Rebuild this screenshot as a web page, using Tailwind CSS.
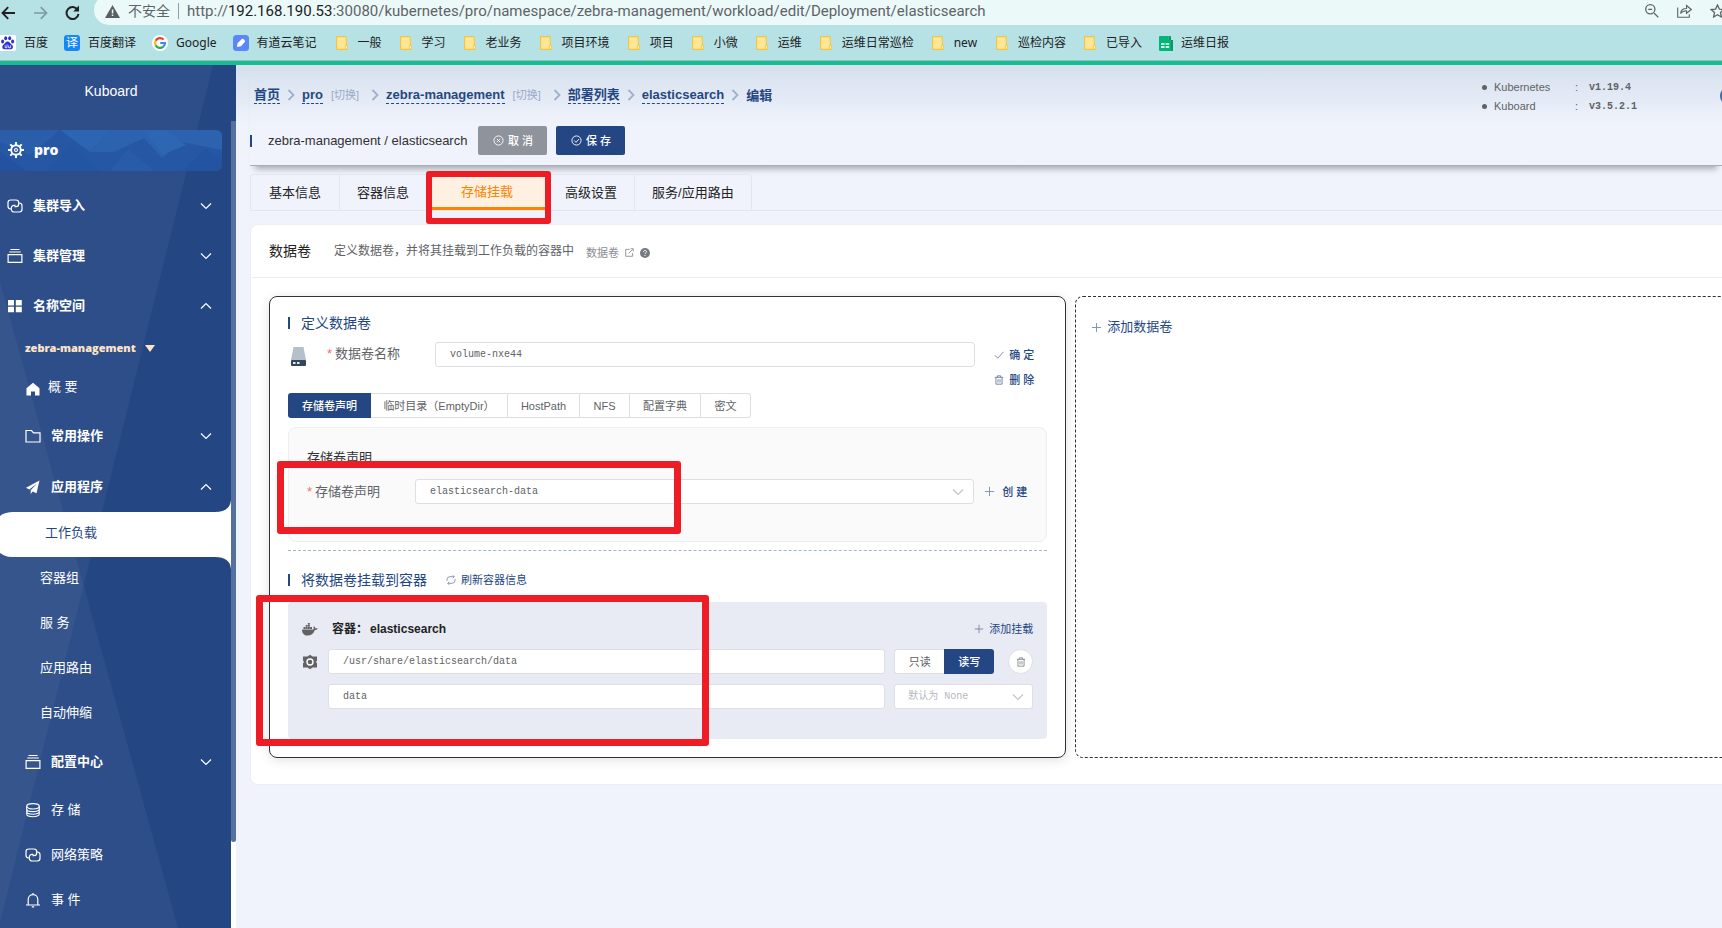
<!DOCTYPE html>
<html lang="zh-CN">
<head>
<meta charset="utf-8">
<title>Kuboard</title>
<script src="https://cdn.jsdelivr.net/npm/@tailwindcss/browser@4"></script>
</head>
<body class="min-h-screen flex flex-col overflow-hidden bg-[#f0f3fc] font-['Liberation_Sans','Noto_Sans_CJK_SC',sans-serif] text-[13px] leading-5 text-[#303133]">

<!-- Shared icons -->
<svg class="hidden" aria-hidden="true">
  <symbol id="down" viewBox="0 0 12 12"><path d="M1 3.500l5 5 5-5" fill="none" stroke="currentColor" stroke-width="1.200"/></symbol>
  <symbol id="up" viewBox="0 0 12 12"><path d="M1 8.500l5-5 5 5" fill="none" stroke="currentColor" stroke-width="1.200"/></symbol>
  <symbol id="right" viewBox="0 0 8 12"><path d="M1.500 1l5 5-5 5" fill="none" stroke="currentColor" stroke-width="1.800"/></symbol>
  <symbol id="plus" viewBox="0 0 12 12"><path d="M6 1v10M1 6h10" fill="none" stroke="currentColor"/></symbol>
  <symbol id="folder" viewBox="0 0 12 14"><path d="M.6.6h9.600v8.600l1.200 1v3.200H.6z" fill="#fee694" stroke="#eec64a" stroke-width="1.100"/><path d="M9.400 9.600h2v3.400h-2z" fill="#fff4c8" stroke="#eec64a" stroke-width=".8"/></symbol>
  <symbol id="link" viewBox="0 0 16 16"><g fill="none" stroke="currentColor" stroke-width="1.200"><path d="M4 11H3.700A2.700 2.700 0 0 1 1 8.300V4.700A2.700 2.700 0 0 1 3.700 2H9A2.700 2.700 0 0 1 11.700 4.700V6A2.700 2.700 0 0 1 9 8.700H7.500"/><path d="M12 5h.3A2.700 2.700 0 0 1 15 7.700v3.600A2.700 2.700 0 0 1 12.300 14H7A2.700 2.700 0 0 1 4.300 11.300V10A2.700 2.700 0 0 1 7 7.300H8.500"/></g></symbol>
  <symbol id="stack" viewBox="0 0 16 16"><path d="M3.500 1.500h9M2.200 4h11.600M1.100 6.600h13.800v7.800H1.100z" fill="none" stroke="currentColor" stroke-width="1.200"/></symbol>
  <symbol id="trash" viewBox="0 0 12 12"><path d="M1 2.800h10M4 2.600V1h4v1.600M2.300 3v8h7.400V3M4.800 5v4M7.200 5v4" fill="none" stroke="currentColor"/></symbol>
</svg>

<header class="bg-[#b7e2e5] text-[#202124] border-b-4 border-[#12bf92] overflow-hidden font-['Noto_Sans','Noto_Sans_CJK_SC',sans-serif]">
  <div class="h-[25px] flex items-center pl-px overflow-hidden">
    <button class="w-8 shrink-0" aria-label="后退"><svg class="w-[15px] h-[14px]" viewBox="0 0 15 14"><path d="M14 7H1.500M7.200 1.200L1.500 7l5.700 5.800" fill="none" stroke="#202124" stroke-width="1.900"/></svg></button>
    <button class="w-8 shrink-0" aria-label="前进"><svg class="w-[15px] h-[14px]" viewBox="0 0 15 14"><path d="M1 7h12.500M7.800 1.200L13.500 7l-5.700 5.800" fill="none" stroke="#7c9c9f" stroke-width="1.700"/></svg></button>
    <button class="w-[29px] shrink-0" aria-label="重新加载"><svg class="w-[15px] h-[15px]" viewBox="0 0 15 15"><path d="M12.600 4.800A6 6 0 1 0 13.500 9" fill="none" stroke="#202124" stroke-width="2"/><path d="M14 .6v5.800H8.200z" fill="#202124"/></svg></button>
    <div class="flex-1 min-w-0 h-[30px] -mt-[5px] pt-[2px] flex items-center bg-[#ebf9f9] rounded-l-full pl-[11px] text-[14px]">
      <svg class="w-[15px] h-[13px]" viewBox="0 0 15 13"><path d="M7.500 0L15 13H0z" fill="#5a6062"/><path d="M6.800 4.500h1.500v4H6.800zM6.800 9.500h1.500V11H6.800z" fill="#ebf9f9"/></svg>
      <span class="pl-2 text-[#5f6368]">不安全</span>
      <span class="w-px h-4 bg-[#8fa0a2] mx-2"></span>
      <span class="text-[#5f6368] font-['Roboto'] text-[15px] whitespace-nowrap">http://<span class="text-[#202124]">192.168.190.53</span>:30080/kubernetes/pro/namespace/zebra-management/workload/edit/Deployment/elasticsearch</span>
      <span class="flex-1"></span>
      <span class="flex shrink-0 gap-[18px] -mr-[3px] text-[#5f6368]">
        <svg class="w-[14px] h-[14px]" viewBox="0 0 14 14"><path d="M9.200 9.200L13.400 13.400M3.200 5.300h4" fill="none" stroke="currentColor" stroke-width="1.300"/><circle cx="5.300" cy="5.300" r="4.600" fill="none" stroke="currentColor" stroke-width="1.300"/></svg>
        <svg class="w-[15px] h-[14px]" viewBox="0 0 15 14"><path d="M.7 3.500v9.800h11.600v-3M3.500 9.500c.5-3.500 3-5 6-5V1.500L14.300 5.500 9.500 9.300V6.700C7 6.700 5 7.500 3.500 9.500z" fill="none" stroke="currentColor" stroke-width="1.100"/></svg>
        <svg class="w-[15px] h-[14px]" viewBox="0 0 15 14"><path d="M7.500 1l1.900 4.100 4.400.5-3.300 3 .9 4.400-3.900-2.200L3.600 13l.9-4.400-3.300-3 4.400-.5z" fill="none" stroke="currentColor" stroke-width="1.300"/></svg>
      </span>
    </div>
  </div>
  <nav class="h-9 pt-px flex items-center gap-4 text-[12px] whitespace-nowrap border-b border-[#9fb9bd]">
    <a href="#" class="flex items-center gap-2"><svg class="w-4 h-4" viewBox="0 0 16 16"><path d="M0 0h14a2 2 0 0 1 2 2v12a2 2 0 0 1-2 2H0z" fill="#fff"/><g fill="#2a32d8"><ellipse cx="2.600" cy="6.600" rx="1.500" ry="2"/><ellipse cx="5.700" cy="3.200" rx="1.500" ry="2"/><ellipse cx="9.700" cy="3.200" rx="1.500" ry="2"/><ellipse cx="12.600" cy="6.600" rx="1.500" ry="2"/><path d="M7.600 6.400c2 0 2.700 2.200 4.200 3.400 1.800 1.400 1.500 4.500-1 4.500H4.500c-2.500 0-2.800-3-1-4.500C5 8.600 5.600 6.400 7.600 6.400z"/></g><path d="M5.200 10.300v2.400H7V9.400M8.600 10.500v2.200h2v-2.300" fill="none" stroke="#fff" stroke-width=".8"/></svg>百度</a>
    <a href="#" class="flex items-center gap-2"><span class="w-4 h-4 rounded-[3px] bg-[#1688f5] text-white text-[12px] leading-4 text-center">译</span>百度翻译</a>
    <a href="#" class="flex items-center gap-2"><svg class="w-4 h-4" viewBox="0 0 16 16"><circle cx="8" cy="8" r="8" fill="#fff"/><g fill="none" stroke-width="2.200"><path d="M11.600 4.600A5 5 0 0 0 3.600 5.700" stroke="#ea4335"/><path d="M3.600 5.700a5 5 0 0 0 0 4.600" stroke="#fbbc05"/><path d="M3.600 10.300a5 5 0 0 0 7.700 1.400" stroke="#34a853"/><path d="M11.300 11.700A5 5 0 0 0 13 8H8.200" stroke="#4285f4"/></g></svg>Google</a>
    <a href="#" class="flex items-center gap-2"><svg class="w-4 h-4" viewBox="0 0 16 16"><rect width="16" height="16" rx="3.500" fill="#5b86f8"/><path d="M4 12l.5-3.800L9 3.800c.8-.8 3.800 1.800 3 3L8 11.300z" fill="#fff"/></svg>有道云笔记</a>
    <a href="#" class="flex items-center gap-[10px] pl-[3px]"><svg class="w-3 h-[14px]"><use href="#folder"/></svg>一般</a>
    <a href="#" class="flex items-center gap-[10px] pl-[2px]"><svg class="w-3 h-[14px]"><use href="#folder"/></svg>学习</a>
    <a href="#" class="flex items-center gap-[10px] pl-[2px]"><svg class="w-3 h-[14px]"><use href="#folder"/></svg>老业务</a>
    <a href="#" class="flex items-center gap-[10px] pl-[2px]"><svg class="w-3 h-[14px]"><use href="#folder"/></svg>项目环境</a>
    <a href="#" class="flex items-center gap-[10px] pl-[2px]"><svg class="w-3 h-[14px]"><use href="#folder"/></svg>项目</a>
    <a href="#" class="flex items-center gap-[10px] pl-[2px]"><svg class="w-3 h-[14px]"><use href="#folder"/></svg>小微</a>
    <a href="#" class="flex items-center gap-[10px] pl-[2px]"><svg class="w-3 h-[14px]"><use href="#folder"/></svg>运维</a>
    <a href="#" class="flex items-center gap-[10px] pl-[2px]"><svg class="w-3 h-[14px]"><use href="#folder"/></svg>运维日常巡检</a>
    <a href="#" class="flex items-center gap-[10px] pl-[2px]"><svg class="w-3 h-[14px]"><use href="#folder"/></svg>new</a>
    <a href="#" class="flex items-center gap-[10px] pl-[3px]"><svg class="w-3 h-[14px]"><use href="#folder"/></svg>巡检内容</a>
    <a href="#" class="flex items-center gap-[10px] pl-[2px]"><svg class="w-3 h-[14px]"><use href="#folder"/></svg>已导入</a>
    <a href="#" class="flex items-center gap-2 pl-px"><svg class="w-[14px] h-[15px]" viewBox="0 0 14 15"><path d="M1 0h8.500v4H14v10a1 1 0 0 1-1 1H1a1 1 0 0 1-1-1V1a1 1 0 0 1 1-1z" fill="#00b578"/><path d="M9.500 0h1.500a1 1 0 0 1 1 1v3H9.500zM12 4h2v10a1 1 0 0 1-1 1h-1z" fill="#0a9a5c"/><path d="M2 7h3.600v2H2zM6.600 7h3.600v2H6.600zM2 10h3.600v2H2zM6.600 10h3.600v2H6.600z" fill="#c9f2df"/></svg>运维日报</a>
  </nav>
</header>

<div class="flex-1 flex min-h-0">
  <!-- Sidebar -->
  <aside class="relative w-[236px] shrink-0 bg-[#244783] text-white">
    <svg class="absolute inset-0 w-full h-full" viewBox="0 0 236 863" preserveAspectRatio="none">
      <path d="M0 0H213L0 857z" fill="#fff" fill-opacity=".045"/>
      <path d="M0 217L178 863H0z" fill="#fff" fill-opacity=".045"/>
    </svg>
    <div class="absolute right-0 top-14 bottom-0 w-[5px] bg-white"><div class="h-[89.4%] bg-[#56709d] rounded-b-sm"></div></div>
    <div class="relative pr-[5px]">
      <div class="h-[65px] pt-4 pr-[9px] text-center text-[14px]">Kuboard</div>
      <a href="#" class="relative mr-[9px] h-[41px] flex items-center gap-[10px] pl-2 pb-0.5 rounded-r-md overflow-hidden bg-[#2557a5] font-['Open_Sans'] font-extrabold text-[14px]">
        <svg class="absolute inset-0 w-full h-full" viewBox="0 0 222 41" preserveAspectRatio="none">
          <path d="M0 0h60L30 25 0 12z" fill="#2b5ea8"/><path d="M60 0h50L90 22z" fill="#2c65b2"/><path d="M110 0h112v20l-40-8-20 16-18-20-30 14-24 0z" fill="#2b63af"/><path d="M144 0l22 0 20 15-24 10z" fill="#2d66b2"/><path d="M70 14l30 27H48z" fill="#2356a2"/><path d="M182 41l24-22 16 10v12z" fill="#2354a2"/><path d="M110 41l18-22 26 22z" fill="#285ca8"/><path d="M0 41V22l26 19z" fill="#2252a0"/>
        </svg>
        <svg class="relative w-4 h-4" viewBox="0 0 16 16"><g fill="none" stroke="#fff"><circle cx="8" cy="8" r="4.800" stroke-width="1.900"/><circle cx="8" cy="8" r="1.500" stroke-width="1.200"/><path d="M8 0v3M8 13v3M0 8h3M13 8h3M2.300 2.300l2.200 2.200M11.500 11.500l2.200 2.200M13.700 2.300l-2.200 2.200M4.500 11.500l-2.200 2.200" stroke-width="1.900"/></g></svg>
        <span class="relative">pro</span>
      </a>
      <nav class="pt-[10px]">
        <a href="#" class="h-[50px] flex items-center pl-[7px] pr-[19px] font-bold"><svg class="w-4 h-4 mr-[10px]"><use href="#link"/></svg>集群导入<svg class="w-3 h-3 ml-auto"><use href="#down"/></svg></a>
        <a href="#" class="h-[50px] flex items-center pl-[7px] pr-[19px] font-bold"><svg class="w-4 h-4 mr-[10px]"><use href="#stack"/></svg>集群管理<svg class="w-3 h-3 ml-auto"><use href="#down"/></svg></a>
        <a href="#" class="h-[50px] flex items-center pl-[7px] pr-[19px] font-bold"><svg class="w-4 h-4 mr-[10px]" viewBox="0 0 16 16"><path d="M1 2h6v5.500H1zM8.800 2h6v5.500h-6zM1 8.800h6v5.400H1zM8.800 8.800h6v5.400h-6z" fill="#fff"/></svg>名称空间<svg class="w-3 h-3 ml-auto"><use href="#up"/></svg></a>
        <button class="h-[34px] flex items-center gap-[9px] pl-[25px] font-['Open_Sans'] font-extrabold text-[11px] text-[#fde3c8]">zebra-management<svg class="w-[10px] h-[7px]" viewBox="0 0 10 7"><path d="M0 0h10L5 7z" fill="currentColor"/></svg></button>
        <a href="#" class="h-[46px] pb-0.5 flex items-center pl-[26px]"><svg class="w-[14px] h-[14px] mr-2 mt-1" viewBox="0 0 14 14"><path d="M7 .8l6.500 5.400V13.500H9V9.500H5v4H.5V6.200z" fill="#fff"/></svg>概 要</a>
        <a href="#" class="h-[50px] flex items-center pl-[25px] pr-[19px] font-bold"><svg class="w-4 h-4 mr-[10px]" viewBox="0 0 16 16"><path d="M1 2.500h5.500l2 2.300H15v9.200H1z" fill="none" stroke="#fff" stroke-width="1.200"/></svg>常用操作<svg class="w-3 h-3 ml-auto"><use href="#down"/></svg></a>
        <a href="#" class="h-[51px] flex items-center pl-[25px] pr-[19px] font-bold"><svg class="w-4 h-4 mr-[10px]" viewBox="0 0 16 16"><path d="M14.500 1.500L1 8.800l3.300 1.600L12 4.500l-6.300 6.700V15l2-2.600 3.800 1.800z" fill="#fff"/></svg>应用程序<svg class="w-3 h-3 ml-auto"><use href="#up"/></svg></a>
        <div class="relative">
          <svg class="absolute right-0 -top-3 w-4 h-3" viewBox="0 0 16 12"><path d="M16 0Q15 12 0 12H16z" fill="#fff"/></svg>
          <a href="#" class="h-[45px] -ml-2 pl-[53px] pb-[3px] flex items-center rounded-l-[20px] bg-white text-[#244783]">工作负载</a>
          <svg class="absolute right-0 -bottom-3 w-4 h-3" viewBox="0 0 16 12"><path d="M16 12Q15 0 0 0H16z" fill="#fff"/></svg>
        </div>
        <a href="#" class="h-[45px] pb-[3px] flex items-center pl-10">容器组</a>
        <a href="#" class="h-[45px] pb-[3px] flex items-center pl-10">服 务</a>
        <a href="#" class="h-[45px] pb-[3px] flex items-center pl-10">应用路由</a>
        <a href="#" class="h-[45px] pb-[3px] flex items-center pl-10">自动伸缩</a>
        <a href="#" class="h-[50px] flex items-center pl-[25px] pr-[19px] font-bold"><svg class="w-4 h-4 mr-[10px]"><use href="#stack"/></svg>配置中心<svg class="w-3 h-3 ml-auto"><use href="#down"/></svg></a>
        <a href="#" class="h-[45px] flex items-center pl-[25px]"><svg class="w-4 h-4 mr-[10px]" viewBox="0 0 16 16"><g fill="none" stroke="#fff" stroke-width="1.100"><ellipse cx="8" cy="4.300" rx="6.300" ry="2.700"/><path d="M1.700 4.300v7.800c0 3.500 12.600 3.500 12.600 0V4.300M1.700 7c0 3.500 12.600 3.500 12.600 0M1.700 9.600c0 3.500 12.600 3.500 12.600 0"/></g></svg>存 储</a>
        <a href="#" class="h-[45px] flex items-center pl-[25px]"><svg class="w-4 h-4 mr-[10px]"><use href="#link"/></svg>网络策略</a>
        <a href="#" class="h-[45px] flex items-center pl-[25px]"><svg class="w-4 h-4 mr-[10px]" viewBox="0 0 16 16"><path d="M1 13h14M3.200 13V7.500C3.200 1 12.800 1 12.800 7.500V13M8 2.600V1M6.800 14.900h2.400" fill="none" stroke="#fff" stroke-width="1.200"/></svg>事 件</a>
      </nav>
    </div>
  </aside>

  <!-- Main column -->
  <main class="flex-1 min-w-0 pl-[14px] overflow-hidden bg-linear-to-b from-[#d5e0ed] to-[#f0f3fc] to-[60px]">
    <div class="h-[101px] border-b border-[#a9adb6] shadow-[0_8px_6px_-5px_rgba(0,0,0,0.3)]">
      <div class="flex h-[60px]">
        <nav class="flex-1 h-5 mt-5 pl-1 flex items-center font-bold text-[#244783] leading-[17px]">
          <a href="#" class="border-b border-dashed border-[#244783]">首页</a>
          <svg class="w-2 h-3 mx-[7px] text-[#9fb0cd]"><use href="#right"/></svg>
          <a href="#" class="border-b border-dashed border-[#244783]">pro</a>
          <a href="#" class="ml-2 font-normal text-[11px] text-[#9aa9c8]">[切换]</a>
          <svg class="w-2 h-3 ml-3 mr-[7px] text-[#9fb0cd]"><use href="#right"/></svg>
          <a href="#" class="border-b border-dashed border-[#244783]">zebra-management</a>
          <a href="#" class="ml-2 font-normal text-[11px] text-[#9aa9c8]">[切换]</a>
          <svg class="w-2 h-3 ml-3 mr-[7px] text-[#9fb0cd]"><use href="#right"/></svg>
          <a href="#" class="border-b border-dashed border-[#244783]">部署列表</a>
          <svg class="w-2 h-3 mx-[7px] text-[#9fb0cd]"><use href="#right"/></svg>
          <a href="#" class="border-b border-dashed border-[#244783]">elasticsearch</a>
          <svg class="w-2 h-3 mx-[7px] text-[#9fb0cd]"><use href="#right"/></svg>
          <span>编辑</span>
        </nav>
        <ul class="w-[240px] pt-[13px] text-[11px] leading-[19px] text-[#606266]">
          <li class="flex items-center"><span class="w-[5px] h-[5px] ml-0.5 mr-[7px] rounded-full bg-[#606266]"></span><span class="w-[81px]">Kubernetes</span><span class="w-[14px]">:</span><b class="font-['Liberation_Mono'] text-[10px]">v1.19.4</b></li>
          <li class="flex items-center"><span class="w-[5px] h-[5px] ml-0.5 mr-[7px] rounded-full bg-[#606266]"></span><span class="w-[81px]">Kuboard</span><span class="w-[14px]">:</span><b class="font-['Liberation_Mono'] text-[10px]">v3.5.2.1</b></li>
        </ul>
        <span class="w-5 h-5 mt-[21px] -mr-[18px] rounded-full bg-[#3f68a8]"></span>
      </div>
      <div class="flex items-center h-[31px]">
        <h1 class="flex items-center gap-4 before:w-0.5 before:h-3 before:bg-[#244783] mr-[11px]">zebra-management / elasticsearch</h1>
        <button class="w-[69px] h-[29px] mr-[9px] flex items-center justify-center gap-1 rounded-[2px] bg-[#8f939b] text-white text-[11px] font-medium"><svg class="w-[11px] h-[11px]" viewBox="0 0 12 12"><circle cx="6" cy="6" r="5" fill="none" stroke="#fff"/><path d="M4.200 4.200l3.600 3.600M7.800 4.200L4.200 7.800" stroke="#fff"/></svg>取 消</button>
        <button class="w-[69px] h-[29px] flex items-center justify-center gap-1 rounded-[2px] bg-[#244783] text-white text-[11px] font-medium"><svg class="w-[11px] h-[11px]" viewBox="0 0 12 12"><circle cx="6" cy="6" r="5" fill="none" stroke="#fff"/><path d="M3.500 6l2 2 3.200-3.600" fill="none" stroke="#fff"/></svg>保 存</button>
      </div>
    </div>

    <div class="mt-2 h-[37px] flex border-b border-[#e2e6ef] text-[#222]">
      <div class="relative flex border border-b-0 border-[#e2e6ef] rounded-t-[4px]">
        <button class="px-[18px] border-r border-[#e2e6ef]">基本信息</button>
        <button class="px-[17px]">容器信息</button>
        <div class="relative flex">
          <button class="w-[122px] pt-[2px] bg-[#fff1e2] text-[#ff8200] border-b-[3px] border-[#ff8200]">存储挂载</button>
          <span class="absolute left-0 -right-[3px] -top-1 -bottom-[14px] border-[6px] border-[#ee1c25] rounded-[3px]"></span>
        </div>
        <button class="px-[17px] border-r border-[#e2e6ef]">高级设置</button>
        <button class="px-[17px]">服务/应用路由</button>
      </div>
    </div>

    <section class="mt-[13px] -mr-2 bg-white border border-[#ebeef5] rounded-lg">
      <div class="h-[53px] flex items-center pl-[18px] border-b border-[#ebeef5]">
        <h2 class="text-[14px] text-[#222] mr-[23px]">数据卷</h2>
        <span class="text-[12px] text-[#606266] mr-3">定义数据卷，并将其挂载到工作负载的容器中</span>
        <a href="#" class="pt-[3px] flex items-center gap-[6px] text-[11px] text-[#8a8d93]">数据卷
          <svg class="w-[9px] h-[9px]" viewBox="0 0 10 10"><path d="M5 1.500H.8v7.700h7.700V5.500M4 6l4.500-4.500M6.200.8h3v3" fill="none" stroke="currentColor"/></svg>
          <svg class="w-[10px] h-[10px]" viewBox="0 0 10 10"><circle cx="5" cy="5" r="5" fill="#777b81"/><path d="M3.500 4c0-2 3-2 3-.2C6.500 5 5 4.800 5 6M5 7v1" fill="none" stroke="#fff"/></svg>
        </a>
      </div>

      <div class="flex gap-[9px] pt-[18px] pb-[26px] pl-[18px]">
        <!-- Volume being edited -->
        <div class="w-[54.6%] shrink-0 px-[18px] pt-[14px] pb-[18px] border border-[#303133] rounded-lg shadow-[0_2px_12px_rgba(0,0,0,0.12)]">
          <h3 class="h-6 flex items-center gap-[11px] text-[14px] text-[#244783] before:w-0.5 before:h-3 before:bg-[#244783]">定义数据卷</h3>
          <div class="h-[51px] mt-[7px] flex items-start">
            <span class="w-[39px] pt-[5px] pl-[3px]"><svg class="w-[15px] h-[19px]" viewBox="0 0 15 19"><path d="M2.500 0h10L15 13H0z" fill="#b4c1cd"/><rect y="13" width="15" height="6" rx="1" fill="#33475c"/><path d="M2 15h2.500v2H2zM6 15h2.500v2H6z" fill="#e8edf2"/></svg></span>
            <label for="vol" class="w-[108px] leading-6 text-[#606266]"><span class="text-[#f56c6c] mr-[3px]">*</span>数据卷名称</label>
            <input id="vol" value="volume-nxe44" class="flex-1 min-w-0 h-[25px] px-[14px] border border-[#dcdfe6] rounded-[3px] bg-white font-['Liberation_Mono'] text-[10px] text-[#606266]">
            <div class="w-[72px] pl-[19px] text-[11px] text-[#244783] font-medium">
              <button class="h-[25px] flex items-center gap-[5px]"><svg class="w-[10px] h-[10px] text-[#7f8db0]" viewBox="0 0 10 10"><path d="M.8 5.200l3 3L9.500 1.800" fill="none" stroke="currentColor"/></svg>确 定</button>
              <button class="h-[25px] flex items-center gap-[5px]"><svg class="w-[10px] h-[10px] text-[#5f709b]"><use href="#trash"/></svg>删 除</button>
            </div>
          </div>
          <div class="h-[25px] flex text-[11px] text-[#606266]">
            <button class="w-[83px] bg-[#244783] text-white font-medium rounded-l-[3px]">存储卷声明</button>
            <button class="w-[137px] border-y border-r border-[#dcdfe6]">临时目录（EmptyDir）</button>
            <button class="w-[72px] border-y border-r border-[#dcdfe6]">HostPath</button>
            <button class="w-[50px] border-y border-r border-[#dcdfe6]">NFS</button>
            <button class="w-[71px] border-y border-r border-[#dcdfe6]">配置字典</button>
            <button class="w-[50px] border-y border-r border-[#dcdfe6] rounded-r-[3px]">密文</button>
          </div>
          <div class="relative mt-[9px] h-[115px] pl-[18px] pt-[18px] bg-[#fafafa] border border-[#ebeef5] rounded-lg">
            <h4 class="h-6 leading-6 text-[#303133]">存储卷声明</h4>
            <div class="mt-[9px] flex items-center">
              <label for="pvc" class="w-[108px] text-[#606266]"><span class="text-[#f56c6c] mr-[3px]">*</span>存储卷声明</label>
              <div class="relative flex-1 flex">
                <select id="pvc" class="appearance-none w-full h-[25px] px-[14px] border border-[#dcdfe6] rounded-[3px] bg-white font-['Liberation_Mono'] text-[10px] text-[#606266]"><option>elasticsearch-data</option></select>
                <svg class="absolute right-[10px] top-[7px] w-3 h-3 text-[#c0c4cc] pointer-events-none"><use href="#down"/></svg>
              </div>
              <button class="w-[72px] pl-[10px] flex items-center gap-[7px] text-[11px] text-[#244783] font-medium"><svg class="w-[11px] h-[11px] text-[#7f8db0]"><use href="#plus"/></svg>创 建</button>
            </div>
            <span class="absolute -left-3 top-[33px] w-[404px] h-[73px] border-[7px] border-[#ee1c25] rounded-[3px]"></span>
          </div>
          <hr class="mt-2 border-t border-dashed border-[#a3b4cd]">
          <div class="mt-[17px] h-6 flex items-center">
            <h3 class="flex items-center gap-[11px] text-[14px] text-[#244783] before:w-0.5 before:h-3 before:bg-[#244783]">将数据卷挂载到容器</h3>
            <button class="ml-[19px] flex items-center gap-[5px] text-[11px] text-[#244783]"><svg class="w-[10px] h-[10px] text-[#7f8db0]" viewBox="0 0 10 10"><path d="M1 6V4.500A3 3 0 0 1 4 1.700h4M9 4v1.500a3 3 0 0 1-3 2.800H2M6.800.2l1.500 1.500L6.800 3.200M3.200 6.800L1.700 8.300l1.500 1.500" fill="none" stroke="currentColor" stroke-width=".9"/></svg>刷新容器信息</button>
          </div>
          <div class="relative mt-[10px] h-[137px] px-[14px] pt-[14px] bg-[#e8ebf3] rounded-[4px]">
            <div class="h-[26px] flex items-center">
              <svg class="w-4 h-[13px] mr-[14px]" viewBox="0 0 16 13"><path d="M0 6.500h11.200c.8-.6.700-1.700.2-2.500l.6-.8c.9.6 1.200 1.400 1.300 2.200.8-.2 1.800-.1 2.400.4-.6.9-1.600 1.200-2.800 1.200C11.500 10.800 9 12.600 5.500 12.600 1.800 12.600 0 10 0 6.500zM1.500 4h1.900v1.900H1.500zM3.700 4h1.900v1.900H3.700zM5.900 4h1.900v1.900H5.900zM8.100 4H10v1.900H8.100zM3.700 2h1.900v1.700H3.700zM5.900 2h1.900v1.700H5.900zM5.900 0h1.900v1.700H5.900z" fill="#606266"/></svg>
              <h4 class="font-bold text-[12px] text-[#222]">容器：<span class="ml-[2px]">elasticsearch</span></h4>
              <button class="ml-auto flex items-center gap-[5px] text-[11px] text-[#244783]"><svg class="w-[10px] h-[10px] text-[#6c7da6]"><use href="#plus"/></svg>添加挂载</button>
            </div>
            <div class="mt-[7px] flex items-center">
              <svg class="w-4 h-4 mr-[10px]" viewBox="0 0 16 16"><path d="M1 2.500h4.500L8 .8l2.500 1.700H15v4l-1 1.500 1 1.500v4h-4.500L8 15.200l-2.500-1.700H1v-4L2 8 1 6.500z" fill="#606266"/><circle cx="8" cy="8" r="3" fill="none" stroke="#fff" stroke-width="1.400"/></svg>
              <input aria-label="挂载路径" value="/usr/share/elasticsearch/data" class="flex-1 min-w-0 h-[25px] px-[14px] border border-[#dcdfe6] rounded-[3px] bg-white font-['Liberation_Mono'] text-[10px] text-[#606266]">
              <div class="w-[139px] ml-[9px] flex text-[11px]">
                <button class="w-[50px] h-[25px] bg-white border border-r-0 border-[#dcdfe6] rounded-l-[3px] text-[#606266]">只读</button>
                <button class="w-[50px] h-[25px] bg-[#244783] rounded-r-[3px] text-white font-medium">读写</button>
                <button aria-label="删除" class="ml-auto w-[25px] h-[25px] flex items-center justify-center bg-white border border-[#dcdfe6] rounded-full text-[#7b7e84]"><svg class="w-[10px] h-[10px]"><use href="#trash"/></svg></button>
              </div>
            </div>
            <div class="mt-[10px] flex items-center pl-[26px]">
              <input aria-label="子路径" value="data" class="flex-1 min-w-0 h-[25px] px-[14px] border border-[#dcdfe6] rounded-[3px] bg-white font-['Liberation_Mono'] text-[10px] text-[#606266]">
              <div class="relative w-[139px] ml-[9px] flex">
                <select aria-label="挂载传播" class="appearance-none w-full h-[25px] px-[13px] border border-[#dcdfe6] rounded-[3px] bg-white font-['Liberation_Mono','Noto_Sans_CJK_SC',monospace] text-[10px] text-[#b4b8c0]"><option>默认为 None</option></select>
                <svg class="absolute right-[9px] top-[7px] w-3 h-3 text-[#c0c4cc] pointer-events-none"><use href="#down"/></svg>
              </div>
            </div>
            <span class="absolute -left-8 -top-[7px] w-[453px] h-[151px] border-[7px] border-[#ee1c25] rounded-[3px]"></span>
          </div>
        </div>

        <!-- Placeholder for a further volume -->
        <div class="flex-1 -mr-4 pl-[15px] pt-[20px] border border-dashed border-[#303133] rounded-lg">
          <button class="flex items-center gap-[5px] text-[#244783]"><svg class="w-[11px] h-[11px] text-[#7f8db0]"><use href="#plus"/></svg>添加数据卷</button>
        </div>
      </div>
    </section>
  </main>
</div>
</body>
</html>
